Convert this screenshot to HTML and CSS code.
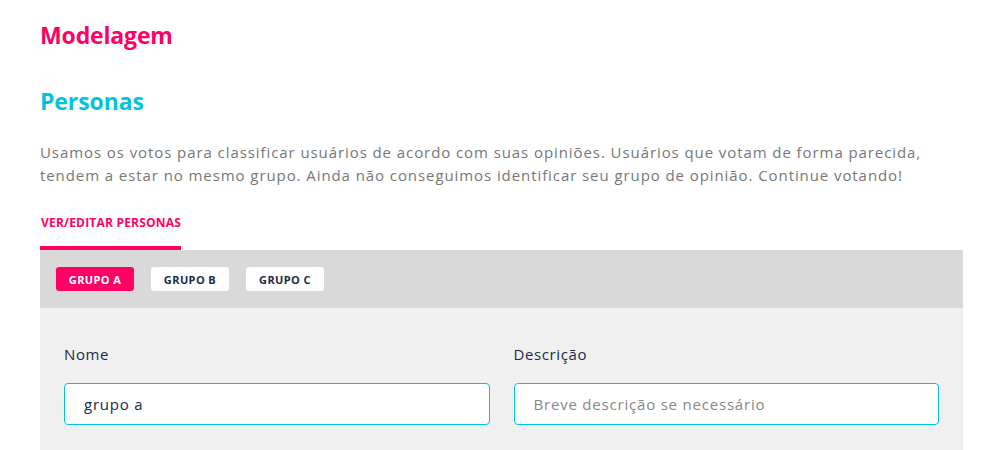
FILE: index.html
```html
<!DOCTYPE html>
<html lang="pt">
<head>
<meta charset="utf-8">
<link rel="stylesheet" href="styles.css">
</head>
<body>
<main class="page">
  <h1 class="title">Modelagem</h1>
  <h2 class="subtitle">Personas</h2>
  <p class="intro">Usamos os votos para classificar usuários de acordo com suas opiniões. Usuários que votam de forma parecida, tendem a estar no mesmo grupo. Ainda não conseguimos identificar seu grupo de opinião. Continue votando!</p>
  <nav class="tabs">
    <span class="tab active">VER/EDITAR PERSONAS</span>
  </nav>
  <section class="panel">
    <div class="groups">
      <button class="group active">GRUPO A</button>
      <button class="group">GRUPO B</button>
      <button class="group">GRUPO C</button>
    </div>
    <div class="form">
      <label class="field">
        <span class="label">Nome</span>
        <input class="input" type="text" value="grupo a">
      </label>
      <label class="field">
        <span class="label">Descrição</span>
        <input class="input" type="text" placeholder="Breve descrição se necessário">
      </label>
    </div>
  </section>
</main>
</body>
</html>
```
FILE: styles.css
```css
* { box-sizing: border-box; }
html, body { margin: 0; padding: 0; background: #fff; }
body { font-family: "Open Sans", "Liberation Sans", sans-serif; }
.page { padding: 20px 40px 0 40px; }
.title {
  margin: 0;
  font-size: 23px;
  font-weight: 700;
  color: #ff0064;
  line-height: 30px;
  letter-spacing: -0.15px;
}
.subtitle {
  margin: 36px 0 0 0;
  font-size: 23px;
  font-weight: 700;
  color: #00c4dd;
  line-height: 30px;
  letter-spacing: -0.1px;
}
.intro {
  margin: 25px 0 0 0;
  font-size: 15px;
  line-height: 23px;
  color: #777;
  letter-spacing: 0.92px;
  max-width: 900px;
}
.tabs { margin-top: 28px; display: flex; }
.tab {
  font-size: 12px;
  font-weight: 700;
  color: #ff0064;
  padding: 0 0 15px 1px;
  width: 141px;
  border-bottom: 4px solid #ff0064;
  line-height: 16px;
  letter-spacing: 0.2px;
  white-space: nowrap;
}
.panel { background: #f0f0f0; padding-bottom: 30px; }
.groups {
  background: #d9d9d9;
  height: 58px;
  display: flex;
  align-items: center;
  gap: 17px;
  padding: 0 16px;
}
.group {
  font-family: inherit;
  border: 0;
  border-radius: 3px;
  background: #fff;
  color: #1b2a4a;
  font-size: 11px;
  font-weight: 700;
  letter-spacing: 0.4px;
  width: 78px;
  height: 24px;
  padding: 0;
}
.group.active { background: #ff0064; color: #fff; }
.form {
  display: grid;
  grid-template-columns: 1fr 1fr;
  gap: 24px;
  padding: 35px 24px 0 24px;
}
.field { display: flex; flex-direction: column; }
.label {
  font-size: 15px;
  color: #1b2a4a;
  line-height: 22px;
  margin-bottom: 18px;
  letter-spacing: 0.6px;
}
.input {
  font-family: inherit;
  height: 42px;
  border: 1px solid #00c4dd;
  border-radius: 4px;
  background: #fff;
  padding: 0 19px;
  font-size: 15px;
  letter-spacing: 0.8px;
  color: #1b2a4a;
  outline: none;
}
.input::placeholder { color: #888; }
```
